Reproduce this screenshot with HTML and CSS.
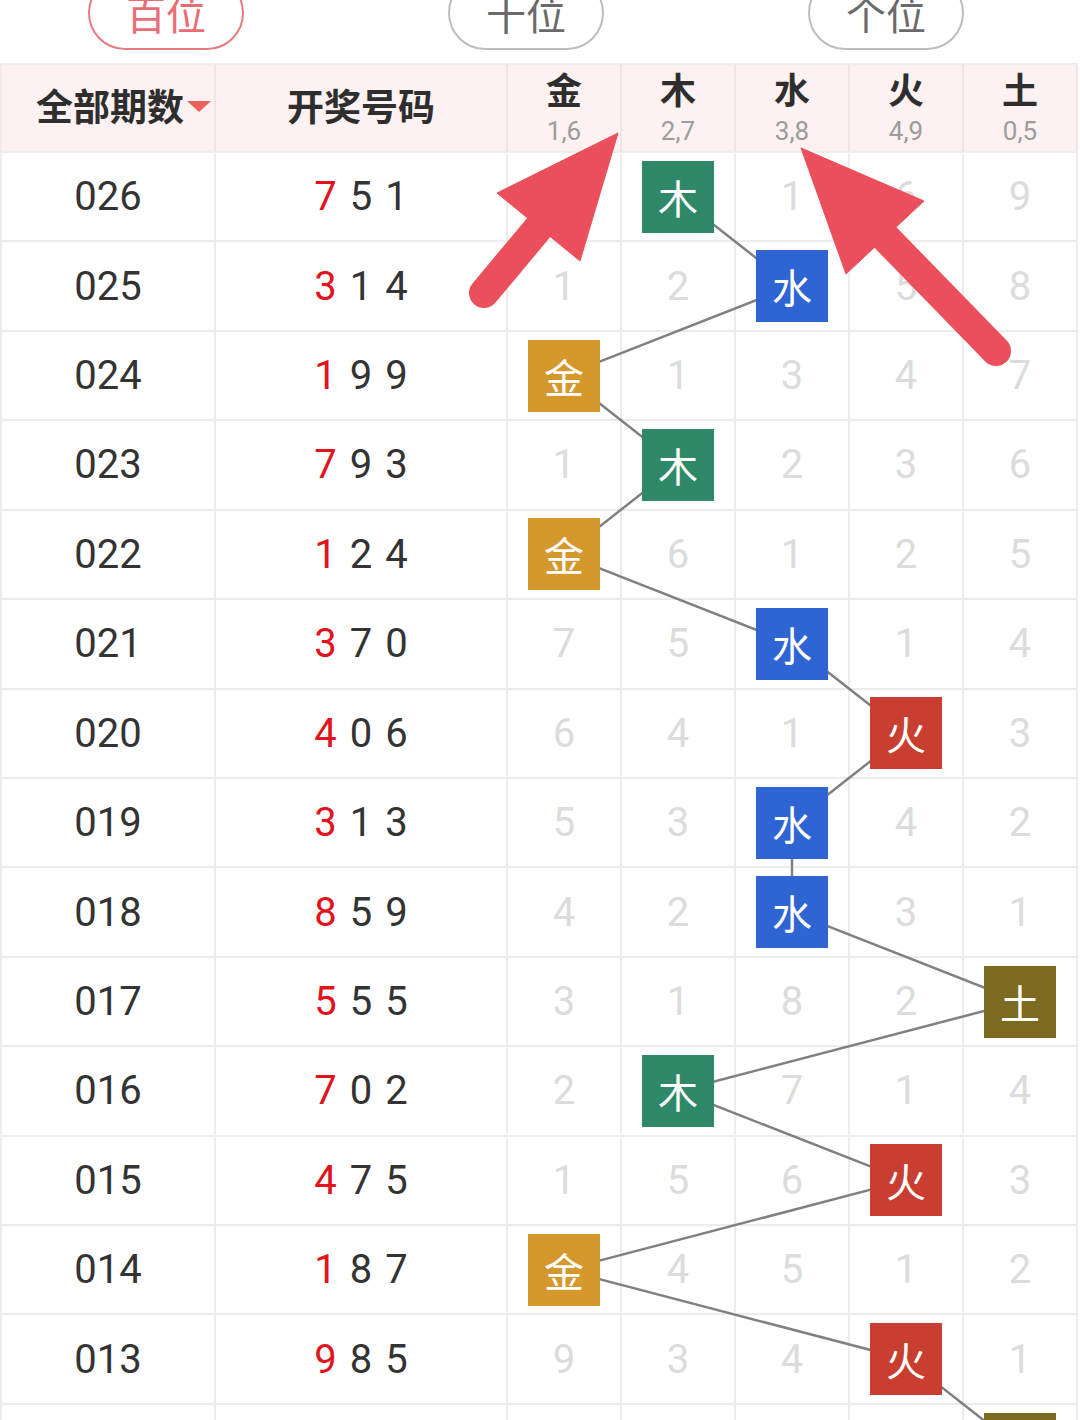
FILE: index.html
```html
<!DOCTYPE html>
<html lang="zh-CN">
<head>
<meta charset="utf-8">
<title>五行走势</title>
<link rel="stylesheet" href="styles.css">
</head>
<body>
<div class="tabs">
  <div class="pill active">百位</div>
  <div class="pill">十位</div>
  <div class="pill">个位</div>
</div>

<div class="table">
  <div class="row head">
    <div class="cell hp"><span>全部期数</span><i class="tri"></i></div>
    <div class="cell hn">开奖号码</div>
    <div class="cell el"><b>金</b><small>1,6</small></div>
    <div class="cell el"><b>木</b><small>2,7</small></div>
    <div class="cell el"><b>水</b><small>3,8</small></div>
    <div class="cell el"><b>火</b><small>4,9</small></div>
    <div class="cell el"><b>土</b><small>0,5</small></div>
  </div>

  <div class="row">
    <div class="cell period">026</div>
    <div class="cell nums"><em>7</em><span>5</span><span>1</span></div>
    <div class="cell miss">2</div>
    <div class="cell"><span class="box mu">木</span></div>
    <div class="cell miss">1</div>
    <div class="cell miss">6</div>
    <div class="cell miss">9</div>
  </div>
  <div class="row">
    <div class="cell period">025</div>
    <div class="cell nums"><em>3</em><span>1</span><span>4</span></div>
    <div class="cell miss">1</div>
    <div class="cell miss">2</div>
    <div class="cell"><span class="box shui">水</span></div>
    <div class="cell miss">5</div>
    <div class="cell miss">8</div>
  </div>
  <div class="row">
    <div class="cell period">024</div>
    <div class="cell nums"><em>1</em><span>9</span><span>9</span></div>
    <div class="cell"><span class="box jin">金</span></div>
    <div class="cell miss">1</div>
    <div class="cell miss">3</div>
    <div class="cell miss">4</div>
    <div class="cell miss">7</div>
  </div>
  <div class="row">
    <div class="cell period">023</div>
    <div class="cell nums"><em>7</em><span>9</span><span>3</span></div>
    <div class="cell miss">1</div>
    <div class="cell"><span class="box mu">木</span></div>
    <div class="cell miss">2</div>
    <div class="cell miss">3</div>
    <div class="cell miss">6</div>
  </div>
  <div class="row">
    <div class="cell period">022</div>
    <div class="cell nums"><em>1</em><span>2</span><span>4</span></div>
    <div class="cell"><span class="box jin">金</span></div>
    <div class="cell miss">6</div>
    <div class="cell miss">1</div>
    <div class="cell miss">2</div>
    <div class="cell miss">5</div>
  </div>
  <div class="row">
    <div class="cell period">021</div>
    <div class="cell nums"><em>3</em><span>7</span><span>0</span></div>
    <div class="cell miss">7</div>
    <div class="cell miss">5</div>
    <div class="cell"><span class="box shui">水</span></div>
    <div class="cell miss">1</div>
    <div class="cell miss">4</div>
  </div>
  <div class="row">
    <div class="cell period">020</div>
    <div class="cell nums"><em>4</em><span>0</span><span>6</span></div>
    <div class="cell miss">6</div>
    <div class="cell miss">4</div>
    <div class="cell miss">1</div>
    <div class="cell"><span class="box huo">火</span></div>
    <div class="cell miss">3</div>
  </div>
  <div class="row">
    <div class="cell period">019</div>
    <div class="cell nums"><em>3</em><span>1</span><span>3</span></div>
    <div class="cell miss">5</div>
    <div class="cell miss">3</div>
    <div class="cell"><span class="box shui">水</span></div>
    <div class="cell miss">4</div>
    <div class="cell miss">2</div>
  </div>
  <div class="row">
    <div class="cell period">018</div>
    <div class="cell nums"><em>8</em><span>5</span><span>9</span></div>
    <div class="cell miss">4</div>
    <div class="cell miss">2</div>
    <div class="cell"><span class="box shui">水</span></div>
    <div class="cell miss">3</div>
    <div class="cell miss">1</div>
  </div>
  <div class="row">
    <div class="cell period">017</div>
    <div class="cell nums"><em>5</em><span>5</span><span>5</span></div>
    <div class="cell miss">3</div>
    <div class="cell miss">1</div>
    <div class="cell miss">8</div>
    <div class="cell miss">2</div>
    <div class="cell"><span class="box tu">土</span></div>
  </div>
  <div class="row">
    <div class="cell period">016</div>
    <div class="cell nums"><em>7</em><span>0</span><span>2</span></div>
    <div class="cell miss">2</div>
    <div class="cell"><span class="box mu">木</span></div>
    <div class="cell miss">7</div>
    <div class="cell miss">1</div>
    <div class="cell miss">4</div>
  </div>
  <div class="row">
    <div class="cell period">015</div>
    <div class="cell nums"><em>4</em><span>7</span><span>5</span></div>
    <div class="cell miss">1</div>
    <div class="cell miss">5</div>
    <div class="cell miss">6</div>
    <div class="cell"><span class="box huo">火</span></div>
    <div class="cell miss">3</div>
  </div>
  <div class="row">
    <div class="cell period">014</div>
    <div class="cell nums"><em>1</em><span>8</span><span>7</span></div>
    <div class="cell"><span class="box jin">金</span></div>
    <div class="cell miss">4</div>
    <div class="cell miss">5</div>
    <div class="cell miss">1</div>
    <div class="cell miss">2</div>
  </div>
  <div class="row">
    <div class="cell period">013</div>
    <div class="cell nums"><em>9</em><span>8</span><span>5</span></div>
    <div class="cell miss">9</div>
    <div class="cell miss">3</div>
    <div class="cell miss">4</div>
    <div class="cell"><span class="box huo">火</span></div>
    <div class="cell miss">1</div>
  </div>
  <div class="row">
    <div class="cell period">012</div>
    <div class="cell nums"><em>5</em><span>3</span><span>6</span></div>
    <div class="cell miss">8</div>
    <div class="cell miss">2</div>
    <div class="cell miss">3</div>
    <div class="cell miss">1</div>
    <div class="cell"><span class="box tu">土</span></div>
  </div>
</div>

<svg class="links" width="1080" height="1520" viewBox="0 0 1080 1520" aria-hidden="true">
  <polyline fill="none" stroke="#808080" stroke-width="2.5" stroke-linejoin="round"
    points="678,196.7 792,286.1 564,375.6 678,465 564,554.4 792,643.9 906,733.3 792,822.7 792,912.1 1020,1001.6 678,1091 906,1180.4 564,1269.9 906,1359.3 1020,1448.7"/>
</svg>

<svg class="arrows" width="1080" height="1420" viewBox="0 0 1080 1420" aria-hidden="true">
  <g fill="#ea4f5b" stroke="#ea4f5b">
    <line x1="484" y1="293" x2="540" y2="226" stroke-width="30" stroke-linecap="round"/>
    <polygon points="618,133 497,193 580,261" stroke-width="1" stroke-linejoin="miter"/>
    <line x1="996" y1="351" x2="884" y2="236" stroke-width="30" stroke-linecap="round"/>
    <polygon points="801,148 924,201 846,274" stroke-width="1" stroke-linejoin="miter"/>
  </g>
</svg>
</body>
</html>
```

FILE: styles.css
```css
* {
  box-sizing: border-box;
}

html, body {
  margin: 0;
  padding: 0;
}

body {
  position: relative;
  width: 1080px;
  height: 1420px;
  overflow: hidden;
  background: #ffffff;
  font-family: Roboto, "Noto Sans CJK SC", sans-serif;
  color: #333333;
}

/* top position tabs */
.tabs {
  display: flex;
  align-items: flex-start;
  height: 63px;
  padding-left: 88px;
  gap: 204px;
}

.pill {
  width: 156px;
  height: 74px;
  margin-top: -24px;
  border: 2px solid #bdbdbd;
  border-radius: 37px;
  font-family: "Noto Sans CJK SC", sans-serif;
  font-size: 40px;
  line-height: 70px;
  text-align: center;
  color: #6a6a6a;
}

.pill.active {
  border-color: #ea7a80;
  color: #ec6c74;
}

/* table */
.table {
  width: 1078px;
  border-left: 2px solid #ececec;
}

.row {
  display: grid;
  grid-template-columns: 214px 292px repeat(5, 114px);
  height: 89.43px;
  border-bottom: 2px solid #ececec;
}

.cell {
  display: flex;
  align-items: center;
  justify-content: center;
  border-right: 2px solid #ececec;
}

.head {
  height: 90px;
  border-top: 2px solid #eeeeee;
  border-bottom: 2px solid #eeeeee;
  background: #fdf1f1;
}

.head .cell {
  border-right-color: #f1e6e6;
  font-family: "Noto Sans CJK SC", sans-serif;
  font-weight: 700;
  color: #2e2e2e;
}

.hp {
  justify-content: flex-start;
  padding-left: 34px;
  padding-bottom: 6px;
  font-size: 37px;
}

.hn {
  padding-bottom: 6px;
  font-size: 37px;
}

.tri {
  display: block;
  width: 0;
  height: 0;
  margin-left: 3px;
  margin-top: 2px;
  border-left: 12px solid transparent;
  border-right: 12px solid transparent;
  border-top: 11px solid #f0605c;
}

.el {
  flex-direction: column;
  gap: 9px;
  padding-bottom: 4px;
}

.el b {
  display: block;
  font-size: 36px;
  line-height: 40px;
  font-weight: 700;
}

.el small {
  display: block;
  font-family: Roboto, sans-serif;
  font-weight: 400;
  font-size: 26px;
  line-height: 28px;
  color: #9c9c9c;
}

.period {
  font-size: 40px;
  color: #333333;
}

.nums {
  gap: 13px;
  font-size: 40px;
  color: #333333;
}

.nums em {
  font-style: normal;
  color: #e3131d;
}

.miss {
  font-size: 40px;
  color: #dcdcdc;
}

.box {
  position: relative;
  z-index: 2;
  display: flex;
  align-items: center;
  justify-content: center;
  width: 72px;
  height: 72px;
  font-family: "Noto Sans CJK SC", sans-serif;
  font-size: 40px;
  color: #ffffff;
}

.jin { background: #d5982c; }
.mu { background: #2f8968; }
.shui { background: #2f65d2; }
.huo { background: #c83f31; }
.tu { background: #7c6a20; }

/* trend line overlay, under the boxes */
.links {
  position: absolute;
  left: 0;
  top: 0;
  z-index: 1;
  pointer-events: none;
}

/* annotation arrows on top */
.arrows {
  position: absolute;
  left: 0;
  top: 0;
  z-index: 3;
  pointer-events: none;
}
```
